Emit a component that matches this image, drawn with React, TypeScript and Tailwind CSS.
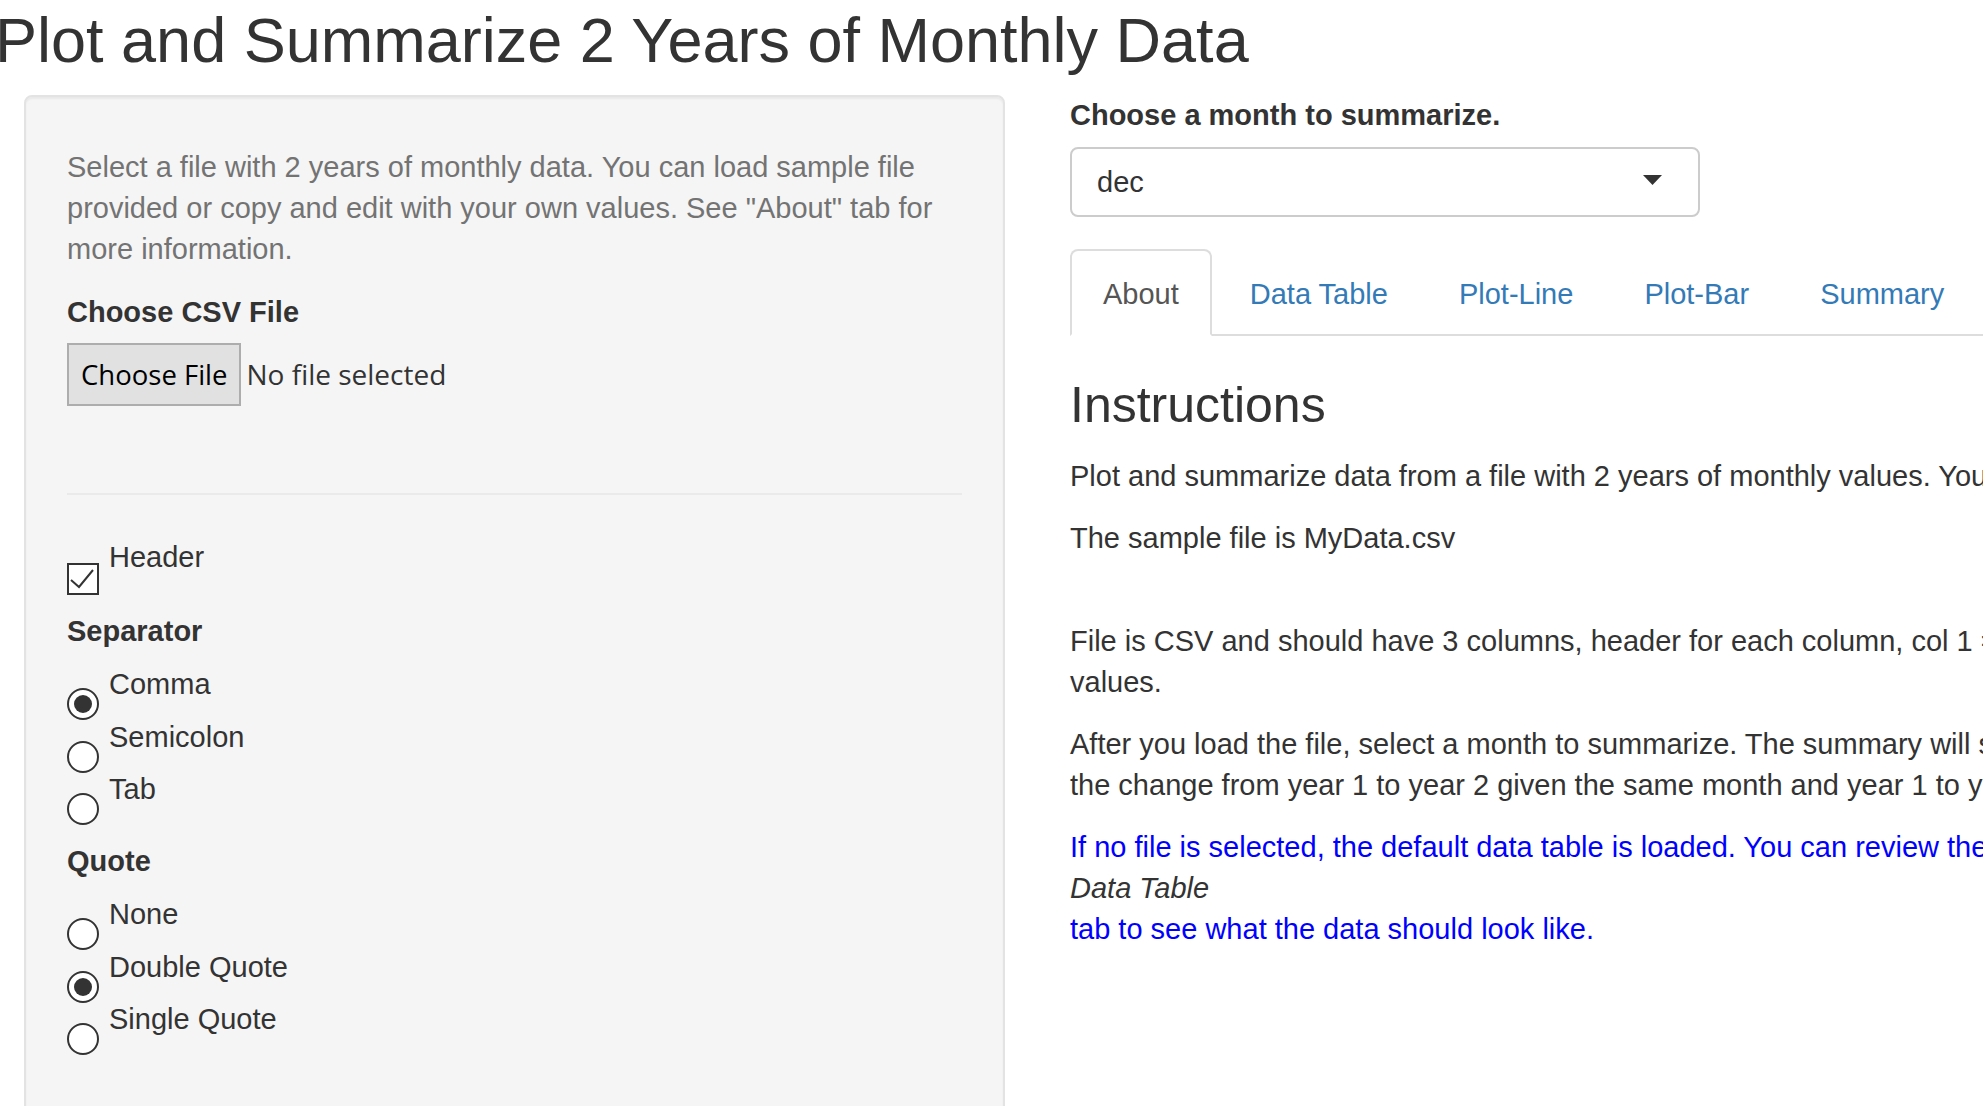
import React from "react";

const SANS = "font-['Liberation_Sans',Arial,Helvetica,sans-serif]";

function Radio({ checked }: { checked?: boolean }) {
  return (
    <span className="mt-[24px] flex h-[32px] w-[32px] shrink-0 items-center justify-center rounded-full border-2 border-[#333] bg-white">
      {checked && <span className="h-[18px] w-[18px] rounded-full bg-[#333]" />}
    </span>
  );
}

function RadioRow({ label, checked }: { label: string; checked?: boolean }) {
  return (
    <div className="flex h-[41px] items-start">
      <Radio checked={checked} />
      <span className="ml-[10px]">{label}</span>
    </div>
  );
}

function Sidebar() {
  return (
    <div className="h-[1100px] w-[981px] shrink-0 rounded-[8px] border-2 border-[#e3e3e3] bg-[#f5f5f5] px-[41px] pt-[40px] shadow-[inset_0_2px_2px_rgba(0,0,0,0.05)]">
      <p className="mb-[21.5px] mt-[10px] text-[#737373]">
        Select a file with 2 years of monthly data. You can load sample file
        <br />
        provided or copy and edit with your own values. See "About" tab for
        <br />
        more information.
      </p>

      <label className="mb-[10px] block font-bold">Choose CSV File</label>
      <div className="flex h-[63px] items-center font-['Open_Sans','Noto_Sans',sans-serif] text-[28px]">
        <span className="flex h-[63px] items-center border-2 border-[#adadad] bg-[#e1e1e1] px-[12px] text-[27.5px] text-black">
          Choose File
        </span>
        <span className="ml-[5px] text-[#333]">No file selected</span>
      </div>

      <hr className="mt-[87px] border-0 border-t-2 border-[#eaeaea]" />

      <div className="mt-[42.5px] flex h-[41px] items-start">
        <span className="mt-[26px] flex h-[32px] w-[32px] shrink-0 items-center justify-center border-2 border-[#333] bg-white">
          <svg width="28" height="28" viewBox="0 0 28 28">
            <path d="M2 15 L10 22 L24 5" fill="none" stroke="#333" strokeWidth="2" />
          </svg>
        </span>
        <span className="ml-[10px]">Header</span>
      </div>

      <label className="mt-[33px] block font-bold">Separator</label>
      <div className="mt-[12px] flex flex-col gap-[11.5px]">
        <RadioRow label="Comma" checked />
        <RadioRow label="Semicolon" />
        <RadioRow label="Tab" />
      </div>

      <label className="mt-[31px] block font-bold">Quote</label>
      <div className="mt-[12px] flex flex-col gap-[11.5px]">
        <RadioRow label="None" />
        <RadioRow label="Double Quote" checked />
        <RadioRow label="Single Quote" />
      </div>
    </div>
  );
}

const tabs = ["About", "Data Table", "Plot-Line", "Plot-Bar", "Summary"];

function MainPanel() {
  return (
    <div className="ml-[65px] w-[1300px] shrink-0">
      <label className="mb-[11px] block font-bold">Choose a month to summarize.</label>
      <div className="flex h-[70px] w-[630px] items-center justify-between rounded-[8px] border-2 border-[#ccc] bg-white pl-[25px] pr-[36px]">
        <span>dec</span>
        <svg width="19" height="10" viewBox="0 0 19 10" className="mb-[4px]">
          <path d="M0 0 H19 L9.5 10 Z" fill="#333" />
        </svg>
      </div>

      <ul className="mt-[32px] flex border-b-2 border-[#ddd]">
        {tabs.map((t, i) => (
          <li
            key={t}
            className={
              i === 0
                ? "mb-[-2px] mr-[5px] rounded-t-[8px] border-2 border-[#ddd] border-b-transparent bg-white px-[31px] pb-[19px] pt-[23px] text-[#555]"
                : "mb-[-2px] mr-[5px] rounded-t-[8px] border-2 border-transparent px-[31px] pb-[19px] pt-[23px] text-[#337ab7]"
            }
          >
            {t}
          </li>
        ))}
      </ul>

      <h3 className="mb-[23px] mt-[42px] text-[50px] font-normal leading-[55px]">Instructions</h3>
      <p className="mb-[21px] whitespace-nowrap">
        Plot and summarize data from a file with 2 years of monthly values. You can use the sample file or load your own.
      </p>
      <p className="mb-[21px] whitespace-nowrap">The sample file is MyData.csv</p>
      <br />
      <p className="mb-[21px] whitespace-nowrap">
        File is CSV and should have 3 columns, header for each column, col 1 = year, col 2 = month, col 3 =
        <br />
        values.
      </p>
      <p className="mb-[21px] whitespace-nowrap">
        After you load the file, select a month to summarize. The summary will show
        <br />
        the change from year 1 to year 2 given the same month and year 1 to year 2 totals.
      </p>
      <div className="whitespace-nowrap text-[#0000ff]">
        If no file is selected, the default data table is loaded. You can review the
        <br />
        <em className="text-[#333]">Data Table</em>
        <br />
        tab to see what the data should look like.
      </div>
    </div>
  );
}

export default function App() {
  return (
    <div className={`${SANS} h-[1106px] w-[1983px] overflow-hidden bg-white pt-[6px] text-[29px] leading-[41px] text-[#333]`}>
      <h2 className="mb-[21px] ml-[-5px] whitespace-nowrap text-[63px] font-normal leading-[68px]">
        Plot and Summarize 2 Years of Monthly Data
      </h2>
      <div className="flex">
        <div className="ml-[24px] flex">
          <Sidebar />
        </div>
        <MainPanel />
      </div>
    </div>
  );
}
